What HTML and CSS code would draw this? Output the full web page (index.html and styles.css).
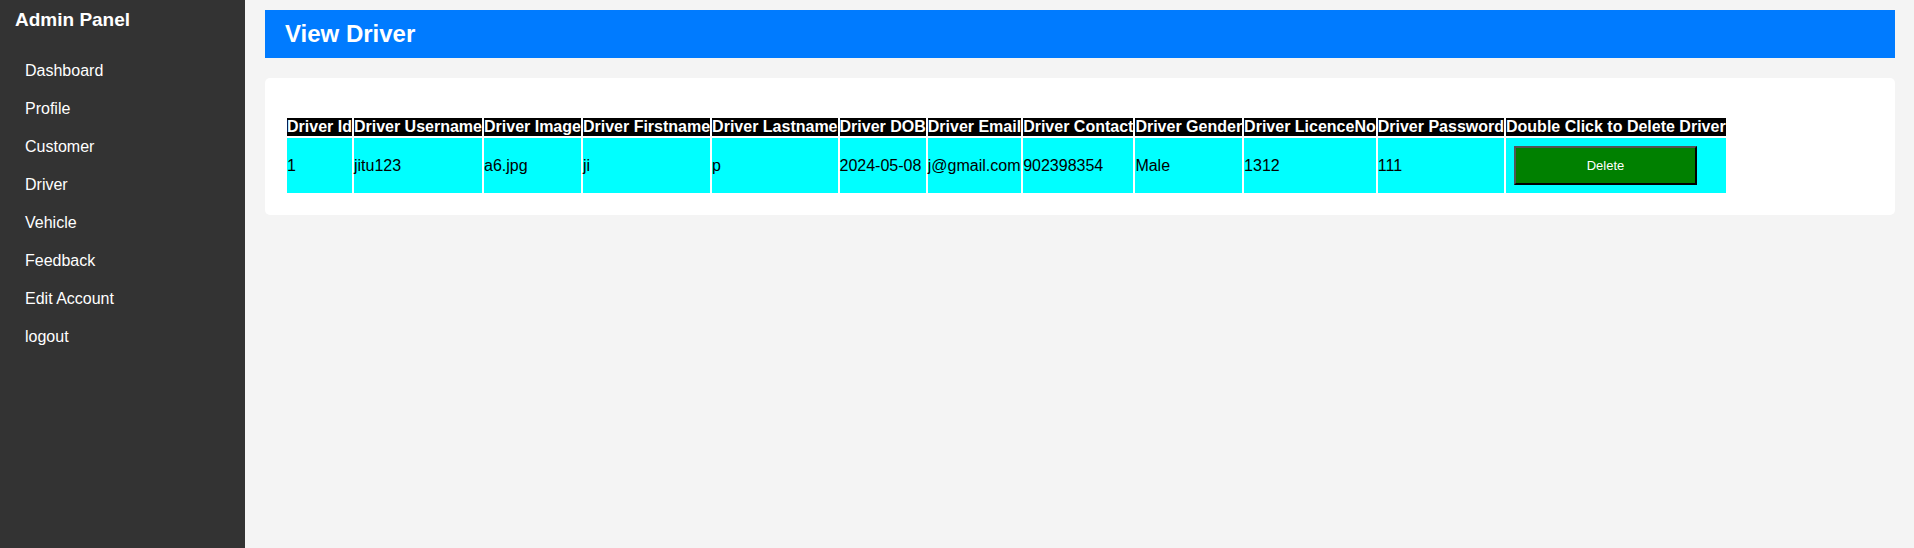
FILE: index.html
```html
<!DOCTYPE html>
<html lang="en">
<head>
<meta charset="utf-8">
<title>View Driver</title>
<link rel="stylesheet" href="styles.css">
</head>
<body>
<div class="layout">
  <nav class="sidebar">
    <h2 class="brand">Admin Panel</h2>
    <ul class="menu">
      <li><a href="#">Dashboard</a></li>
      <li><a href="#">Profile</a></li>
      <li><a href="#">Customer</a></li>
      <li><a href="#">Driver</a></li>
      <li><a href="#">Vehicle</a></li>
      <li><a href="#">Feedback</a></li>
      <li><a href="#">Edit Account</a></li>
      <li><a href="#">logout</a></li>
    </ul>
  </nav>
  <main class="content">
    <header class="header"><h1>View Driver</h1></header>
    <section class="card">
      <table class="drivers">
        <thead>
          <tr>
            <th>Driver Id</th><th>Driver Username</th><th>Driver Image</th><th>Driver Firstname</th><th>Driver Lastname</th><th>Driver DOB</th><th>Driver Email</th><th>Driver Contact</th><th>Driver Gender</th><th>Driver LicenceNo</th><th>Driver Password</th><th>Double Click to Delete Driver</th>
          </tr>
        </thead>
        <tbody>
          <tr>
            <td>1</td><td>jitu123</td><td>a6.jpg</td><td>ji</td><td>p</td><td>2024-05-08</td><td>j@gmail.com</td><td>902398354</td><td>Male</td><td>1312</td><td>111</td><td><button class="delete" type="button">Delete</button></td>
          </tr>
        </tbody>
      </table>
    </section>
  </main>
</div>
</body>
</html>
```
FILE: styles.css
```css
* {
  box-sizing: border-box;
}

body {
  margin: 0;
  font-family: "Liberation Sans", Arial, sans-serif;
  background: #f4f4f4;
}

.layout {
  display: flex;
  min-height: 100vh;
}

.sidebar {
  flex: 0 0 245px;
  background: #333;
  color: #fff;
}

.brand {
  margin: 0;
  padding: 10px 15px;
  font-size: 19px;
  line-height: 20px;
}

.menu {
  list-style: none;
  margin: 12px 0 0;
  padding: 0 15px;
}

.menu a {
  display: block;
  padding: 10px;
  color: #fff;
  font-size: 16px;
  line-height: 18px;
  text-decoration: none;
}

.content {
  flex: 1;
  min-width: 0;
  padding: 10px 19px 10px 20px;
}

.header {
  padding: 10px 20px;
  background: #007bff;
  color: #fff;
}

.header h1 {
  margin: 0;
  font-size: 24px;
  line-height: 28px;
}

.card {
  margin-top: 20px;
  padding: 38px 20px 20px;
  background: #fff;
  border-radius: 5px;
}

.drivers {
  border-spacing: 2px;
  white-space: nowrap;
}

.drivers th {
  padding: 0;
  background: #000;
  color: #fff;
  line-height: 18px;
}

.drivers td {
  padding: 0;
  background: #0ff;
  color: #000;
}

.delete {
  display: block;
  width: 183px;
  margin: 8px;
  padding: 10px;
  border: 2px outset #000;
  background: #008000;
  color: #fff;
  font-family: inherit;
  font-size: 13px;
}
```
